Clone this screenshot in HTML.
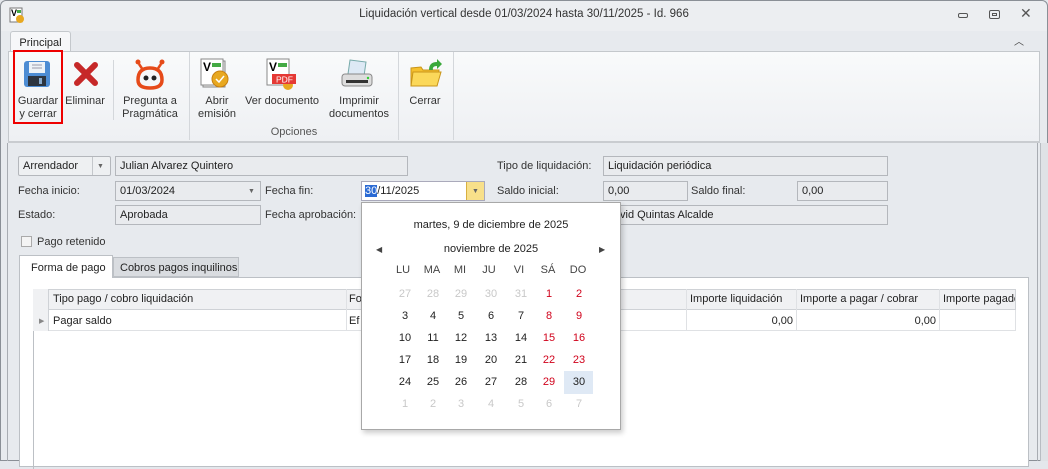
<!DOCTYPE html>
<html><head><meta charset="utf-8"><style>
*{box-sizing:border-box;margin:0;padding:0}
body{width:1048px;height:461px;overflow:hidden;background:#e4e7ec;font-family:"Liberation Sans","DejaVu Sans",sans-serif;font-size:11px;color:#222;position:relative}
.a{position:absolute;white-space:nowrap}
.box{position:absolute;border:1px solid #b4b7bc;background:#e9ebee;padding:3px 0 0 4px;height:20px}
.lbl{position:absolute;white-space:nowrap;color:#333}
.btn{position:absolute;text-align:center;font-size:11px;line-height:13px;color:#333;white-space:nowrap}
.cal span{position:absolute;width:24px;text-align:center}
.g{color:#c8c8c8}.r{color:#d0021b}
.arr{position:absolute;font-size:7px;color:#666;line-height:8px}
</style></head><body>
<div class="a" style="left:0;top:0;width:1048px;height:461px;border:1px solid #8a8f96;border-radius:6px 6px 0 0;background:#e7eaee"></div>
<div class="a" style="left:1px;top:1px;width:1046px;height:30px;background:#eceef1;border-radius:6px 6px 0 0"></div>
<svg class="a" style="left:9px;top:7px" width="16" height="17"><rect x="1" y="1" width="12" height="14" fill="#fff" stroke="#777"/><text x="2" y="9" font-size="9" font-weight="bold" font-family="Liberation Sans">V</text><rect x="8" y="3" width="4" height="3" fill="#4a4"/><circle cx="11" cy="12" r="4" fill="#e8a820"/></svg>
<div class="a" style="left:0;width:1048px;top:8px;text-align:center;font-size:11.5px;color:#333">Liquidación vertical desde 01/03/2024 hasta 30/11/2025 - Id. 966</div>
<div class="a" style="left:958px;top:13px;width:10px;height:5px;border:1px solid #555;border-radius:2px"></div>
<div class="a" style="left:989px;top:10px;width:11px;height:9px;border:1px solid #555;border-radius:2px"><div style="margin:2px;width:5px;height:3px;border:1px solid #555"></div></div>
<div class="a" style="left:1020px;top:5px;font-size:14px;color:#555">✕</div>
<div class="a" style="left:1014px;top:33px;font-size:10px;color:#444">︿</div>
<div class="a" style="left:10px;top:31px;width:61px;height:21px;background:#f6f7f9;border:1px solid #c4c8cc;border-bottom:none;border-radius:3px 3px 0 0;text-align:center;padding-top:5px;font-size:11px">Principal</div>
<div class="a" style="left:8px;top:51px;width:1032px;height:91px;background:linear-gradient(#f9fafb,#eef0f3);border:1px solid #c4c8cc"></div>
<div class="a" style="left:113px;top:60px;width:1px;height:60px;background:#d4d7db"></div>
<div class="a" style="left:189px;top:52px;width:1px;height:88px;background:#d4d7db"></div>
<div class="a" style="left:398px;top:52px;width:1px;height:88px;background:#d4d7db"></div>
<div class="a" style="left:453px;top:52px;width:1px;height:88px;background:#d4d7db"></div>
<div class="a" style="left:8px;top:141px;width:1032px;height:2px;background:#c9ccd0"></div>
<div class="a" style="left:13px;top:50px;width:50px;height:74px;border:2px solid #e00"></div>
<svg class="a" style="left:23px;top:60px" width="28" height="28"><rect x="1" y="1" width="26" height="26" rx="3" fill="#4d8cd3"/><rect x="6" y="2" width="16" height="11" fill="#eef3f8"/><line x1="9" y1="5" x2="19" y2="5" stroke="#99a"/><line x1="9" y1="8" x2="19" y2="8" stroke="#99a"/><rect x="5" y="16" width="18" height="10" fill="#2d3540"/><rect x="16" y="18" width="3" height="6" fill="#8ac"/></svg>
<svg class="a" style="left:73px;top:61px" width="26" height="26"><path d="M4 4 L22 22 M22 4 L4 22" stroke="#c62828" stroke-width="6" stroke-linecap="round"/></svg>
<svg class="a" style="left:134px;top:58px" width="32" height="32"><circle cx="4" cy="4" r="2.5" fill="#e64a19"/><circle cx="28" cy="4" r="2.5" fill="#e64a19"/><path d="M5 6 L9 12 M27 6 L23 12" stroke="#e64a19" stroke-width="2.5"/><path d="M4 22 Q4 10 16 10 Q28 10 28 22 Q28 30 16 30 Q4 30 4 22Z" fill="none" stroke="#e64a19" stroke-width="3.5"/><circle cx="12" cy="20" r="2.5" fill="#222"/><circle cx="20" cy="20" r="2.5" fill="#222"/></svg>
<svg class="a" style="left:200px;top:58px" width="32" height="32"><rect x="3" y="3" width="22" height="26" fill="#eee" stroke="#888"/><rect x="1" y="1" width="22" height="26" fill="#fff" stroke="#888"/><text x="3" y="13" font-size="12" font-weight="bold" font-family="Liberation Sans">V</text><rect x="12" y="5" width="9" height="4" fill="#4a4"/><circle cx="20" cy="21" r="8" fill="#e8a820" stroke="#c88010"/><path d="M16 21 l3 3 l5 -6" stroke="#fff" fill="none" stroke-width="1.5"/></svg>
<svg class="a" style="left:266px;top:58px" width="32" height="32"><rect x="1" y="1" width="22" height="26" fill="#fff" stroke="#888"/><text x="3" y="13" font-size="12" font-weight="bold" font-family="Liberation Sans">V</text><rect x="12" y="5" width="9" height="4" fill="#4a4"/><circle cx="22" cy="27" r="5" fill="#e8a820"/><rect x="6" y="16" width="24" height="10" fill="#e53935"/><text x="10" y="24.5" font-size="8.5" fill="#fff" font-family="Liberation Sans">PDF</text></svg>
<svg class="a" style="left:340px;top:58px" width="34" height="32"><path d="M10 2 L26 4 L24 18 L8 16Z" fill="#dde9f5" stroke="#7aa"/><rect x="2" y="16" width="30" height="12" rx="3" fill="#ddd" stroke="#888"/><rect x="6" y="22" width="22" height="3" fill="#333"/><circle cx="28" cy="20" r="1.2" fill="#3c3"/></svg>
<svg class="a" style="left:409px;top:58px" width="34" height="32"><path d="M2 10 L2 28 L28 28 L30 12 L14 12 L12 9Z" fill="#f5c02e" stroke="#c9951a"/><path d="M4 14 L32 14 L28 28 L2 28Z" fill="#fbd85a" stroke="#c9951a"/><path d="M20 12 Q20 4 28 4 L28 1 L33 6 L28 11 L28 8 Q23 8 24 12Z" fill="#3aa83a"/></svg>
<div class="btn" style="left:14px;top:95px;width:48px">Guardar<br>y cerrar</div>
<div class="btn" style="left:65px;top:95px;width:40px">Eliminar</div>
<div class="btn" style="left:118px;top:95px;width:64px">Pregunta a<br>Pragmática</div>
<div class="btn" style="left:195px;top:95px;width:44px">Abrir<br>emisión</div>
<div class="btn" style="left:242px;top:95px;width:80px">Ver documento</div>
<div class="btn" style="left:325px;top:95px;width:68px">Imprimir<br>documentos</div>
<div class="btn" style="left:404px;top:95px;width:42px">Cerrar</div>
<div class="btn" style="left:190px;top:126px;width:208px;color:#555">Opciones</div>
<div class="a" style="left:7px;top:143px;width:1px;height:318px;background:#a8acb2"></div>
<div class="a" style="left:1037px;top:143px;width:1px;height:318px;background:#a8acb2"></div>
<div class="a" style="left:1040px;top:143px;width:8px;height:318px;background:#dfe2e6;border-left:1px solid #b8bcc2"></div>
<div class="box" style="left:18px;top:156px;width:93px;border-radius:2px;background:#eef0f2">Arrendador</div>
<div class="a" style="left:92px;top:157px;width:1px;height:18px;background:#c4c7cb"></div>
<div class="arr" style="left:97px;top:163px">▼</div>
<div class="box" style="left:115px;top:156px;width:293px">Julian Alvarez Quintero</div>
<div class="lbl" style="left:497px;top:160px">Tipo de liquidación:</div>
<div class="box" style="left:603px;top:156px;width:285px">Liquidación periódica</div>
<div class="lbl" style="left:18px;top:185px">Fecha inicio:</div>
<div class="box" style="left:115px;top:181px;width:146px">01/03/2024</div>
<div class="arr" style="left:248px;top:188px">▼</div>
<div class="lbl" style="left:265px;top:185px">Fecha fin:</div>
<div class="a" style="left:361px;top:181px;width:124px;height:20px;border:1px solid #aab;background:#fff;padding:3px 0 0 3px"><span style="background:#2a6ad4;color:#fff">30</span>/11/2025</div>
<div class="a" style="left:466px;top:182px;width:18px;height:18px;background:#f8e08a;border-left:1px solid #d8b040"></div>
<div class="arr" style="left:472px;top:188px">▼</div>
<div class="lbl" style="left:497px;top:185px">Saldo inicial:</div>
<div class="box" style="left:603px;top:181px;width:85px">0,00</div>
<div class="lbl" style="left:691px;top:185px">Saldo final:</div>
<div class="box" style="left:797px;top:181px;width:91px">0,00</div>
<div class="lbl" style="left:18px;top:209px">Estado:</div>
<div class="box" style="left:115px;top:205px;width:146px">Aprobada</div>
<div class="lbl" style="left:265px;top:209px">Fecha aprobación:</div>
<div class="box" style="left:603px;top:205px;width:285px;padding-left:16px">vid Quintas Alcalde</div>
<div class="a" style="left:21px;top:236px;width:11px;height:11px;border:1px solid #aaa;background:#f4f4f4"></div>
<div class="lbl" style="left:37px;top:236px">Pago retenido</div>
<div class="a" style="left:19px;top:255px;width:94px;height:23px;background:#fff;border:1px solid #bcc0c5;border-bottom:none;padding:6px 0 0 11px;z-index:2">Forma de pago</div>
<div class="a" style="left:113px;top:257px;width:126px;height:20px;background:#d9dce0;border:1px solid #bcc0c5;padding:4px 0 0 6px">Cobros pagos inquilinos</div>
<div class="a" style="left:19px;top:277px;width:1010px;height:190px;background:#fff;border:1px solid #bcc0c5"></div>
<div class="a" style="left:33px;top:289px;width:983px;height:180px;border-left:1px solid #bcc0c5"></div>
<div class="a" style="left:33px;top:289px;width:983px;height:21px;background:#f0f1f3;border:1px solid #cfd2d6;border-left-color:#bcc0c5"></div>
<div class="a" style="left:33px;top:310px;width:983px;height:21px;border-bottom:1px solid #dfe1e4;border-right:1px solid #dfe1e4"></div>
<div class="a" style="left:33px;top:289px;width:16px;height:42px;background:#f0f1f3;border-right:1px solid #cfd2d6"></div>
<div class="a" style="left:39px;top:317px;font-size:7px;color:#888">▶</div>
<div class="a" style="left:346px;top:289px;width:1px;height:42px;background:#dfe1e4"></div>
<div class="a" style="left:686px;top:289px;width:1px;height:42px;background:#dfe1e4"></div>
<div class="a" style="left:796px;top:289px;width:1px;height:42px;background:#dfe1e4"></div>
<div class="a" style="left:939px;top:289px;width:1px;height:42px;background:#dfe1e4"></div>
<div class="a" style="left:53px;top:293px">Tipo pago / cobro liquidación</div>
<div class="a" style="left:349px;top:293px">Fo</div>
<div class="a" style="left:690px;top:293px">Importe liquidación</div>
<div class="a" style="left:800px;top:293px">Importe a pagar / cobrar</div>
<div class="a" style="left:943px;top:293px;width:72px;overflow:hidden">Importe pagado</div>
<div class="a" style="left:53px;top:315px">Pagar saldo</div>
<div class="a" style="left:349px;top:315px">Ef</div>
<div class="a" style="left:686px;top:315px;width:107px;text-align:right">0,00</div>
<div class="a" style="left:797px;top:315px;width:139px;text-align:right">0,00</div>
<div class="a cal" style="left:361px;top:202px;width:260px;height:228px;background:#fff;border:1px solid #a8a8a8;box-shadow:2px 3px 5px rgba(0,0,0,.2)">
<div class="a" style="left:0;top:16px;width:258px;text-align:center">martes, 9 de diciembre de 2025</div>
<div class="a" style="left:14px;top:42px;font-size:8px;color:#444">◀</div>
<div class="a" style="left:0;top:40px;width:258px;text-align:center">noviembre de 2025</div>
<div class="a" style="left:237px;top:42px;font-size:8px;color:#444">▶</div>
<div class="a" style="left:202px;top:168px;width:29px;height:23px;background:#dfe9f5"></div>
<div style="position:absolute;top:61px;left:0;width:258px;color:#444"><span style="left:29px">LU</span><span style="left:58px">MA</span><span style="left:86px">MI</span><span style="left:115px">JU</span><span style="left:145px">VI</span><span style="left:174px">SÁ</span><span style="left:204px">DO</span></div>
<div style="position:absolute;top:85px;left:0"><span class="g" style="left:31px">27</span><span class="g" style="left:59px">28</span><span class="g" style="left:87px">29</span><span class="g" style="left:117px">30</span><span class="g" style="left:147px">31</span><span class="r" style="left:175px">1</span><span class="r" style="left:205px">2</span></div>
<div style="position:absolute;top:107px;left:0"><span style="left:31px">3</span><span style="left:59px">4</span><span style="left:87px">5</span><span style="left:117px">6</span><span style="left:147px">7</span><span class="r" style="left:175px">8</span><span class="r" style="left:205px">9</span></div>
<div style="position:absolute;top:129px;left:0"><span style="left:31px">10</span><span style="left:59px">11</span><span style="left:87px">12</span><span style="left:117px">13</span><span style="left:147px">14</span><span class="r" style="left:175px">15</span><span class="r" style="left:205px">16</span></div>
<div style="position:absolute;top:151px;left:0"><span style="left:31px">17</span><span style="left:59px">18</span><span style="left:87px">19</span><span style="left:117px">20</span><span style="left:147px">21</span><span class="r" style="left:175px">22</span><span class="r" style="left:205px">23</span></div>
<div style="position:absolute;top:173px;left:0"><span style="left:31px">24</span><span style="left:59px">25</span><span style="left:87px">26</span><span style="left:117px">27</span><span style="left:147px">28</span><span class="r" style="left:175px">29</span><span style="left:205px">30</span></div>
<div style="position:absolute;top:195px;left:0"><span class="g" style="left:31px">1</span><span class="g" style="left:59px">2</span><span class="g" style="left:87px">3</span><span class="g" style="left:117px">4</span><span class="g" style="left:147px">5</span><span class="g" style="left:175px">6</span><span class="g" style="left:205px">7</span></div>
</div>
</body></html>
